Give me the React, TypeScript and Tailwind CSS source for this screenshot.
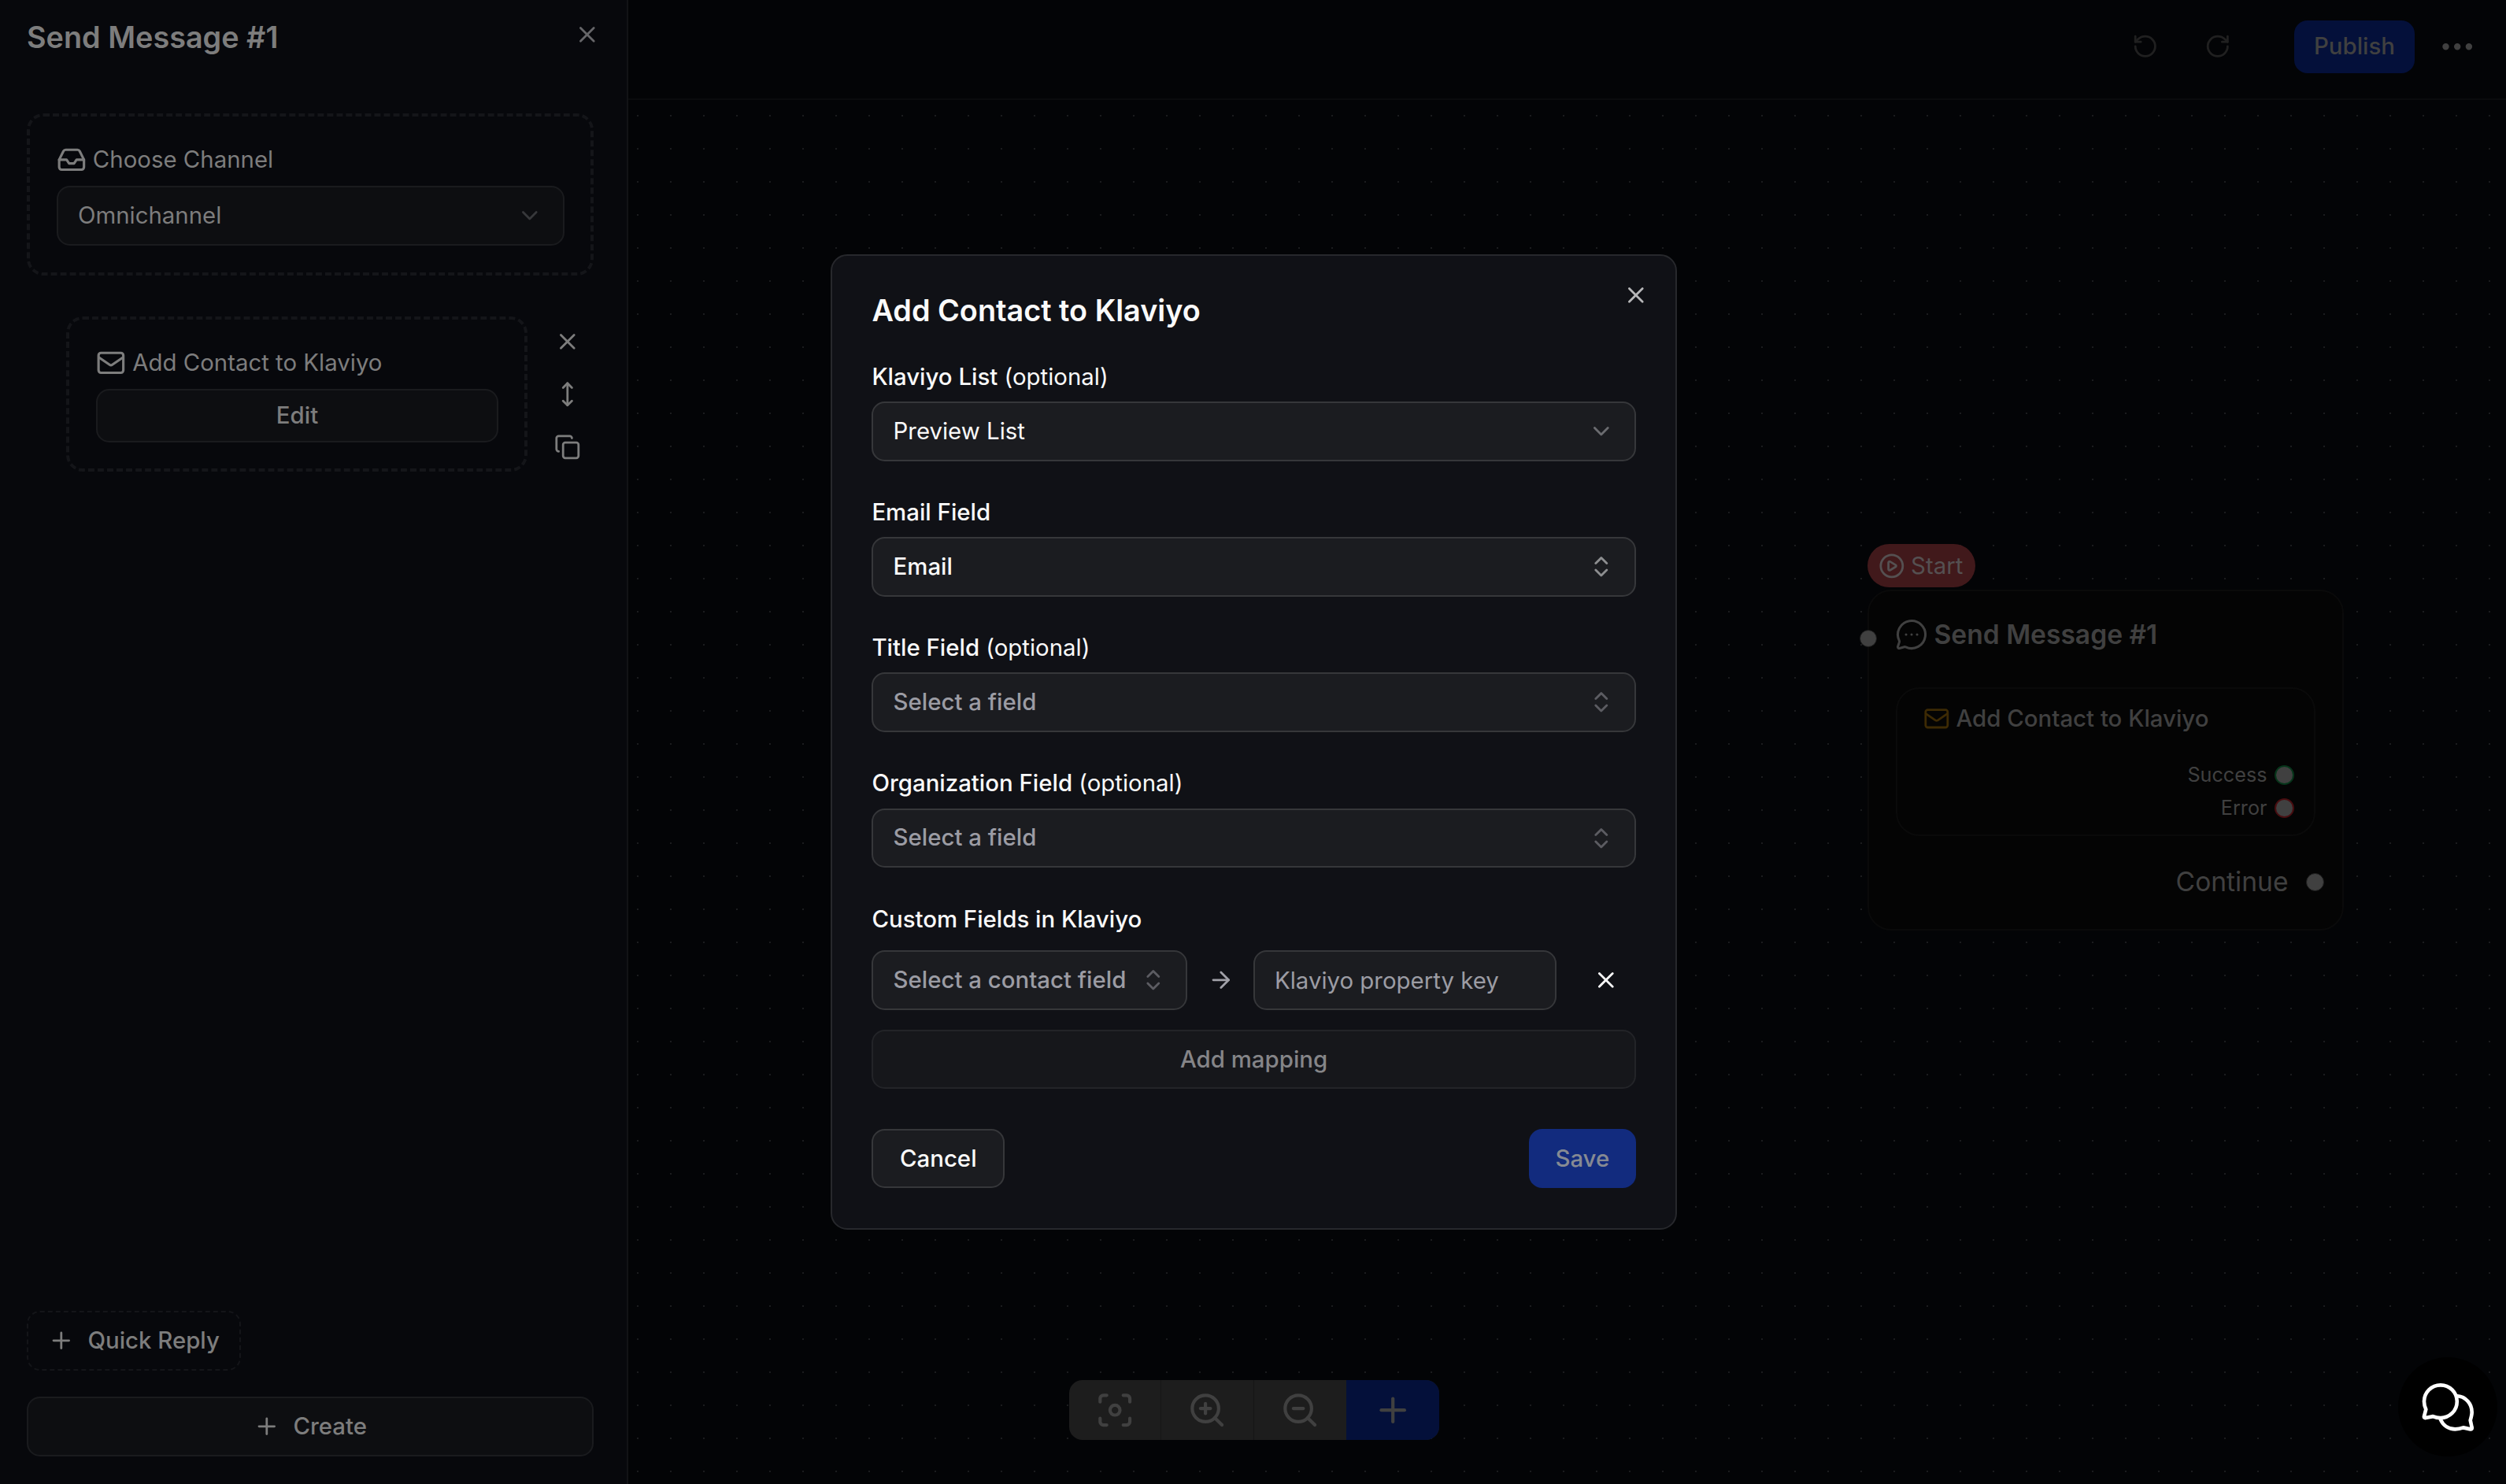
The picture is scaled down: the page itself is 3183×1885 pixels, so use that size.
import type { ReactNode } from "react";
import {
  ArrowRight,
  ChevronDown,
  ChevronsUpDown,
  CirclePlay,
  Copy,
  Ellipsis,
  Focus,
  Inbox,
  MessageCircleMore,
  MoveVertical,
  Plus,
  RotateCcw,
  RotateCw,
  X,
  ZoomIn,
  ZoomOut,
} from "lucide-react";

function MailIcon({ className }: { className: string }) {
  return (
    <svg
      viewBox="0 0 24 24"
      fill="none"
      stroke="currentColor"
      strokeWidth="2"
      strokeLinecap="round"
      strokeLinejoin="round"
      className={className}
    >
      <rect x="2" y="4" width="20" height="16" rx="2" />
      <path d="m2.3 7.6 8.6 5.9a2 2 0 0 0 2.2 0l8.6-5.9" />
    </svg>
  );
}

function ChatIcon() {
  return (
    <svg
      viewBox="160 160 214 202"
      fill="none"
      stroke="currentColor"
      strokeWidth="14"
      strokeLinecap="round"
      strokeLinejoin="round"
      className="h-[67px] w-[71px]"
    >
      <path d="M182 269c-4-9-7-19-7-30a63 63 0 1 1 63 63c-10 0-20-2-29-6l-28 6c-4 1-7-2-6-6z" />
      <path d="M303 218c31 2 55 30 55 62 0 11-3 21-6 31l6 28c1 4-2 7-6 6l-27-6c-10 4-20 6-31 6-25 0-46-14-56-37" />
    </svg>
  );
}

function Header() {
  return (
    <header className="flex h-[127px] shrink-0 items-start justify-end border-b-2 border-[#0a0b0d] pt-[26px] pr-[37px]">
      <div className="flex h-[67px] items-center">
        <RotateCcw className="-mt-px size-[33.6px] text-[#202020]" />
        <RotateCw className="-mt-px ml-[58.4px] size-[33.6px] text-[#202020]" />
        <button className="ml-[80px] flex h-[67px] w-[153px] items-center justify-center rounded-[16.8px] bg-[#04103a] pb-[2px] font-medium text-[#404040]">
          Publish
        </button>
        <Ellipsis className="ml-[28.6px] size-[50.4px] text-[#404040]" />
      </div>
    </header>
  );
}

function Sidebar() {
  return (
    <aside className="flex h-full w-[798px] shrink-0 flex-col border-r-2 border-[#121316] bg-[#07080c] pr-[42px] pl-[34px] text-[#7d7d7d]">
      <div className="flex h-[144px] items-start justify-between">
        <h2 className="mt-[20px] text-[37.8px] leading-[54px] font-semibold">Send Message #1</h2>
        <X className="mt-[27px] -mr-[9px] size-[33.6px] text-[#666669]" />
      </div>

      <div className="flex h-[206px] flex-col rounded-[21px] border-4 border-dashed border-[#141519] pt-[34px] pr-[33px] pl-[34px]">
        <div className="flex h-[42px] items-center gap-[8px]">
          <Inbox className="size-[37.8px]" />
          Choose Channel
        </div>
        <div className="mt-[12px] flex h-[76px] items-center justify-between rounded-[16.8px] border-2 border-[#1a1b1e] bg-[#0d0e11] px-[25px]">
          Omnichannel
          <ChevronDown className="size-[33.6px] text-[#37383b]" />
        </div>
      </div>

      <div className="mt-[52px] flex pl-[50px]">
        <div className="flex h-[197px] w-[586px] flex-col rounded-[21px] border-4 border-dashed border-[#141519] pt-[34px] pr-[33px] pl-[34px]">
          <div className="flex h-[42px] items-center gap-[8.4px]">
            <MailIcon className="size-[37.8px]" />
            Add Contact to Klaviyo
          </div>
          <button className="mt-[12px] flex h-[68px] items-center justify-center rounded-[16.8px] border-2 border-[#1a1b1e] bg-[#0d0e11] font-medium">
            Edit
          </button>
        </div>
        <div className="-mt-[2px] ml-[17px] flex flex-col">
          <button className="flex size-[67px] items-center justify-center">
            <X className="size-[33.6px]" />
          </button>
          <button className="flex size-[67px] items-center justify-center">
            <MoveVertical className="size-[33.6px]" />
          </button>
          <button className="flex size-[67px] items-center justify-center">
            <Copy className="size-[33.6px]" />
          </button>
        </div>
      </div>

      <div className="mt-auto mb-[35px] flex flex-col items-start font-medium">
        <button className="flex h-[76px] items-center gap-[16.8px] rounded-[16.8px] border-2 border-dashed border-[#141519] px-[25px]">
          <Plus className="size-[33.6px]" />
          Quick Reply
        </button>
        <button className="mt-[33px] flex h-[76px] w-[720px] items-center justify-center gap-[16.8px] rounded-[16.8px] border-2 border-[#1a1b1e] bg-[#0d0e11]">
          <Plus className="size-[33.6px]" />
          Create
        </button>
      </div>
    </aside>
  );
}

function FlowNode() {
  return (
    <div className="absolute top-[564px] left-[1573.5px] w-[605px] text-[#404040]">
      <div className="flex h-[55px] w-[137px] items-center gap-[8px] rounded-full bg-[#41191b] pl-[14px] text-[#555051]">
        <CirclePlay className="size-[33.6px]" />
        Start
      </div>
      <div className="relative mt-[3px] flex h-[433px] flex-col rounded-[30px] border-2 border-[#0a0a0a] bg-[#040404] px-[34px] pt-[34px]">
        <span className="absolute top-[49px] -left-[12px] size-[22px] rounded-full border border-[#1c1c1c] bg-[#404040]" />
        <div className="flex h-[42px] items-center gap-[8px] text-[33.6px] font-semibold">
          <MessageCircleMore className="-ml-px size-[42px]" strokeWidth={1.75} />
          Send Message #1
        </div>
        <div className="mt-[46px] flex h-[189px] flex-col rounded-[30px] border-2 border-[#0a0a0a] pt-[21px] pr-[25px] pl-[33px]">
          <div className="flex h-[34px] items-center gap-[8.4px] font-medium">
            <MailIcon className="size-[33.6px] text-[#3d2a04]" />
            Add Contact to Klaviyo
          </div>
          <div className="mt-[41px] flex h-[26px] items-center justify-end gap-[9px] text-[25.2px]">
            Success
            <span className="size-[25px] rounded-full border-2 border-[#06351a] bg-[#404040]" />
          </div>
          <div className="mt-[16px] flex h-[26px] items-center justify-end gap-[9px] text-[25.2px]">
            Error
            <span className="size-[25px] rounded-full border-2 border-[#480d10] bg-[#404040]" />
          </div>
        </div>
        <div className="mt-[34px] -mr-[11px] flex h-[48px] items-center justify-end gap-[22px] text-[33.6px]">
          Continue
          <span className="size-[23px] rounded-full border border-[#1c1c1c] bg-[#404040]" />
        </div>
      </div>
    </div>
  );
}

function CanvasToolbar() {
  return (
    <div className="absolute top-[1626px] left-[560px] flex h-[76px] w-[470px] overflow-hidden rounded-[16.8px] bg-[#1d1d1d] text-[#404040]">
      <button className="flex w-[117px] items-center justify-center border-r border-[#161616]">
        <Focus className="size-[50.4px]" />
      </button>
      <button className="flex w-[118px] items-center justify-center border-r border-[#161616]">
        <ZoomIn className="size-[50.4px]" />
      </button>
      <button className="flex w-[117px] items-center justify-center">
        <ZoomOut className="size-[50.4px]" />
      </button>
      <button className="flex flex-1 items-center justify-center bg-[#04103a]">
        <Plus className="size-[50.4px]" />
      </button>
    </div>
  );
}

function Field({
  label,
  optional = false,
  children,
}: {
  label: string;
  optional?: boolean;
  children: ReactNode;
}) {
  return (
    <div className="flex flex-col gap-[16.8px]">
      <label className="text-[29.4px] leading-[29.4px] font-medium">
        {label}
        {optional && <span className="font-normal"> (optional)</span>}
      </label>
      {children}
    </div>
  );
}

function Combobox({ value, placeholder }: { value?: string; placeholder?: string }) {
  return value ? (
    <button className="flex h-[75.6px] items-center justify-between rounded-[16.8px] border-2 border-[#36373a] bg-[#1b1c20] px-[25.2px] font-medium">
      {value}
      <ChevronsUpDown className="size-[33.6px] text-[#8d8e90]" />
    </button>
  ) : (
    <button className="flex h-[75.6px] items-center justify-between rounded-[16.8px] border-2 border-[#36373a] bg-[#1b1c20] px-[25.2px] font-medium text-[#9c9ca4]">
      {placeholder}
      <ChevronsUpDown className="size-[33.6px] text-[#5c5c62]" />
    </button>
  );
}

function Modal() {
  return (
    <div className="absolute top-[323.2px] left-[1055px] flex w-[1075.2px] flex-col gap-[50.4px] rounded-[21px] border-2 border-[#27282c] bg-[#101116] p-[50.4px] text-[#fafafa]">
      <h1 className="text-[37.8px] leading-[37.8px] font-semibold">Add Contact to Klaviyo</h1>
      <X className="absolute top-[33px] right-[33.5px] size-[33.6px] text-[#b7b7b9]" />

      <Field label="Klaviyo List" optional>
        <button className="flex h-[75.6px] items-center justify-between rounded-[16.8px] border-2 border-[#36373a] bg-[#1b1c20] px-[25.2px]">
          Preview List
          <ChevronDown className="size-[33.6px] text-[#6b6c70]" />
        </button>
      </Field>
      <Field label="Email Field">
        <Combobox value="Email" />
      </Field>
      <Field label="Title Field" optional>
        <Combobox placeholder="Select a field" />
      </Field>
      <Field label="Organization Field" optional>
        <Combobox placeholder="Select a field" />
      </Field>

      <div className="flex flex-col gap-[25.2px]">
        <div className="text-[29.4px] leading-[29.4px] font-medium">Custom Fields in Klaviyo</div>
        <div className="flex h-[75.6px] items-center">
          <div className="flex w-[401px] flex-col">
            <Combobox placeholder="Select a contact field" />
          </div>
          <ArrowRight className="ml-[25.2px] size-[33.6px] text-[#a1a1a8]" />
          <div className="ml-[24.6px] flex h-[75.6px] w-[385px] items-center rounded-[16.8px] border-2 border-[#36373a] bg-[#1b1c20] px-[25.2px] pt-[2px] text-[#9c9ca4]">
            Klaviyo property key
          </div>
          <button className="ml-[25px] flex h-[75.6px] w-[75.6px] items-center justify-center">
            <X className="size-[33.6px]" />
          </button>
        </div>
        <button className="flex h-[75.6px] items-center justify-center rounded-[16.8px] border-2 border-[#232428] bg-[#16171b] font-medium text-[#858588]">
          Add mapping
        </button>
      </div>

      <div className="flex justify-between font-medium">
        <button className="flex h-[75.6px] items-center rounded-[16.8px] border-2 border-[#36373a] bg-[#1b1c20] px-[33.6px]">
          Cancel
        </button>
        <button className="flex h-[75.6px] items-center rounded-[16.8px] bg-[#122b7e] px-[33.6px] text-[#868a93]">
          Save
        </button>
      </div>
    </div>
  );
}

export default function App() {
  return (
    <div className="relative flex h-[1885px] w-[3183px] overflow-hidden bg-[#030406] font-['Inter',sans-serif] text-[29.4px] leading-[42px]">
      <Sidebar />
      <main className="flex min-w-0 flex-1 flex-col">
        <Header />
        <section className="relative flex-1 bg-[radial-gradient(circle,#1b1c1e_1px,transparent_1px)] bg-[length:42px_42px] bg-[position:-9px_-1px]">
          <FlowNode />
          <CanvasToolbar />
        </section>
      </main>
      <Modal />
      <div className="absolute top-[1724px] left-[3046px] flex size-[126px] items-center justify-center rounded-full bg-black text-white">
        <ChatIcon />
      </div>
    </div>
  );
}
